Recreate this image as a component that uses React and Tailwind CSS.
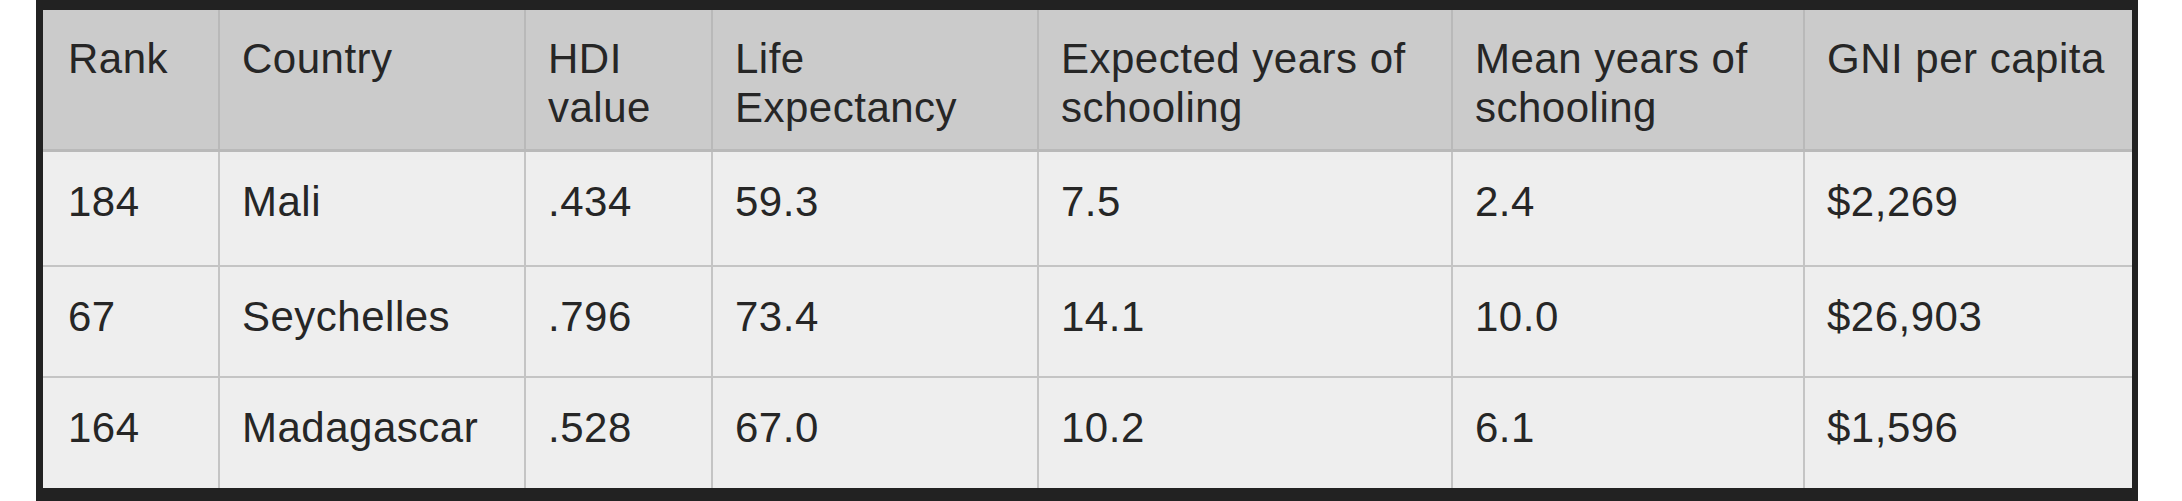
import React from "react";

const headers = [
  "Rank",
  "Country",
  "HDI value",
  "Life Expectancy",
  "Expected years of schooling",
  "Mean years of schooling",
  "GNI per capita",
];

const rows = [
  { h: "h-[113px]", cells: ["184", "Mali", ".434", "59.3", "7.5", "2.4", "$2,269"] },
  { h: "h-[111px]", cells: ["67", "Seychelles", ".796", "73.4", "14.1", "10.0", "$26,903"] },
  { h: "h-[112px]", cells: ["164", "Madagascar", ".528", "67.0", "10.2", "6.1", "$1,596"] },
];

const headerBreaks = {
  "HDI value": ["HDI", "value"],
  "Life Expectancy": ["Life", "Expectancy"],
  "Expected years of schooling": ["Expected years of", "schooling"],
  "Mean years of schooling": ["Mean years of", "schooling"],
};

export default function App() {
  return (
    <div className="w-[2182px] h-[501px] bg-white overflow-hidden">
      <div className="ml-[36px] w-[2102px] bg-[#222222] pt-[10px] pl-[7px] pr-[6px] pb-[20px]">
        <div
          className="grid grid-cols-[175px_306px_187px_326px_414px_352px_329px] text-[42px] leading-[47px] tracking-[0.5px] text-[#262626]"
          style={{ fontFamily: '"Liberation Sans", Arial, sans-serif' }}
        >
          {headers.map((h, i) => (
            <div
              key={h}
              className={`h-[142px] bg-[#cbcbcb] border-b-[3px] border-[#b9b9b9] pt-[24px] leading-[49px] ${
                i === 0 ? "pl-[25px]" : "border-l-2 pl-[22px]"
              }`}
            >
              {(headerBreaks[h] || [h]).map((line) => (
                <div key={line} className="whitespace-nowrap">{line}</div>
              ))}
            </div>
          ))}
          {rows.map((r, ri) =>
            r.cells.map((c, i) => (
              <div
                key={ri + "-" + i}
                className={`${r.h} bg-[#eeeeee] border-[#c4c4c4] pt-[26px] whitespace-nowrap ${
                  ri > 0 ? "border-t-2" : ""
                } ${i === 0 ? "pl-[25px]" : "border-l-2 pl-[22px]"}`}
              >
                {c}
              </div>
            ))
          )}
        </div>
      </div>
    </div>
  );
}
